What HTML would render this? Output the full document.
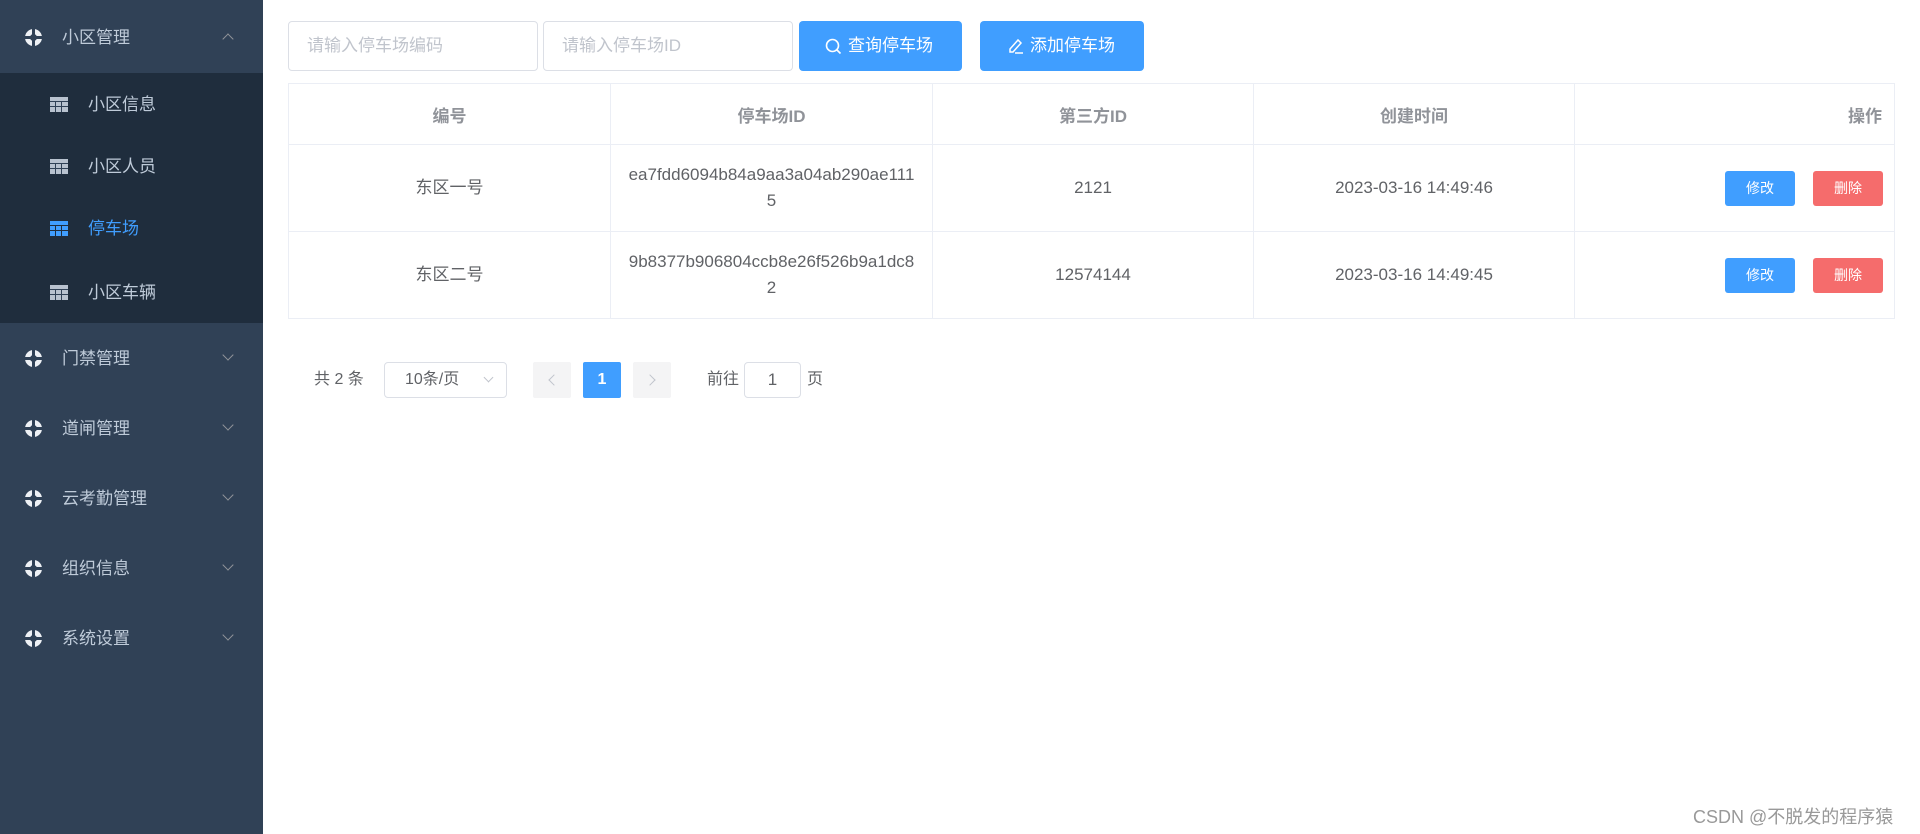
<!DOCTYPE html>
<html><head><meta charset="utf-8"><style>
*{margin:0;padding:0;box-sizing:border-box}
body{width:1920px;height:834px;overflow:hidden;background:#fff;font-family:"Liberation Sans","Noto Sans CJK SC",sans-serif;position:relative;color:#606266}
.side{position:absolute;left:0;top:0;width:263px;height:834px;background:#304156}
.sub{position:absolute;left:0;top:73px;width:263px;height:250px;background:#1f2d3d}
.it{position:absolute;left:0;width:263px;font-size:17px;color:#bfcbd9;line-height:20px}
.gi{position:absolute;left:25px;width:17px;height:17px;border-radius:50%;border:5px solid #eef1f5;}
.gi:after{content:"";position:absolute;left:-6px;top:2px;width:19px;height:3px;background:#304156}
.gi:before{content:"";position:absolute;left:2px;top:-6px;width:3px;height:19px;background:#304156}
.gt{position:absolute;left:62px}
.ar{position:absolute;left:224px;width:8px;height:8px;border-right:1.3px solid #909399;border-bottom:1.3px solid #909399;transform:rotate(45deg)}
.ti{position:absolute;left:50px;width:18px;height:15px;background:
linear-gradient(#304156,#304156) 0 4px/18px 1px no-repeat,
linear-gradient(#304156,#304156) 0 9px/18px 1px no-repeat,
linear-gradient(#304156,#304156) 5px 4px/1px 11px no-repeat,
linear-gradient(#304156,#304156) 11px 4px/1px 11px no-repeat,#b8c2cf}
.st{position:absolute;left:88px}
.inp{position:absolute;top:21px;height:50px;border:1px solid #dcdfe6;border-radius:4px;font-size:17px;color:#c0c4cc;padding:14px 18px;line-height:20px}
.btn{position:absolute;top:21px;height:50px;background:#409eff;border-radius:4px;color:#fff;font-size:17px;line-height:50px}
table{position:absolute;left:288px;top:83px;width:1607px;border-collapse:collapse;font-size:17px}
td,th{border:1px solid #ebeef5;text-align:center;color:#606266;font-weight:normal}
th{height:61px;color:#909399;font-weight:bold}
td{height:87px;line-height:26px}
.b{display:inline-block;width:70px;height:35px;line-height:35px;border-radius:3px;color:#fff;font-size:14px;text-align:center}
.pg{position:absolute;top:362px;height:36px;font-size:16px;line-height:36px}
</style></head><body>
<div class="side">
<div class="it" style="top:28px"><div class="gi" style="top:1px"></div><span class="gt">小区管理</span><div class="ar" style="top:7px;transform:rotate(225deg)"></div></div>
<div class="sub"></div>
<div class="it" style="top:95px"><div class="ti" style="top:2px"></div><span class="st">小区信息</span></div>
<div class="it" style="top:157px"><div class="ti" style="top:2px"></div><span class="st">小区人员</span></div>
<div class="it" style="top:219px;color:#409eff"><div class="ti" style="top:2px;background:
linear-gradient(#1f2d3d,#1f2d3d) 0 4px/18px 1px no-repeat,
linear-gradient(#1f2d3d,#1f2d3d) 0 9px/18px 1px no-repeat,
linear-gradient(#1f2d3d,#1f2d3d) 5px 4px/1px 11px no-repeat,
linear-gradient(#1f2d3d,#1f2d3d) 11px 4px/1px 11px no-repeat,#409eff"></div><span class="st">停车场</span></div>
<div class="it" style="top:283px"><div class="ti" style="top:2px"></div><span class="st">小区车辆</span></div>
<div class="it" style="top:349px"><div class="gi" style="top:1px"></div><span class="gt">门禁管理</span><div class="ar" style="top:2px"></div></div>
<div class="it" style="top:419px"><div class="gi" style="top:1px"></div><span class="gt">道闸管理</span><div class="ar" style="top:2px"></div></div>
<div class="it" style="top:489px"><div class="gi" style="top:1px"></div><span class="gt">云考勤管理</span><div class="ar" style="top:2px"></div></div>
<div class="it" style="top:559px"><div class="gi" style="top:1px"></div><span class="gt">组织信息</span><div class="ar" style="top:2px"></div></div>
<div class="it" style="top:629px"><div class="gi" style="top:1px"></div><span class="gt">系统设置</span><div class="ar" style="top:2px"></div></div>
</div>
<div class="inp" style="left:288px;width:250px">请输入停车场编码</div>
<div class="inp" style="left:543px;width:250px">请输入停车场ID</div>
<div class="btn" style="left:799px;width:163px"><svg style="position:absolute;left:26px;top:17px" width="17" height="17" viewBox="0 0 17 17" fill="none" stroke="#fff" stroke-width="1.6"><circle cx="7.5" cy="7.5" r="6"/><path d="M12 12l3.5 3.5"/></svg><span style="position:absolute;left:49px">查询停车场</span></div>
<div class="btn" style="left:980px;width:164px"><svg style="position:absolute;left:27px;top:16px" width="18" height="18" viewBox="0 0 18 18" fill="none" stroke="#fff" stroke-width="1.5"><path d="M3 12L11 3l3 3-8 9H3z"/><path d="M8 16h8"/></svg><span style="position:absolute;left:50px">添加停车场</span></div>
<table>
<tr><th style="width:322px">编号</th><th style="width:322px">停车场ID</th><th style="width:321px">第三方ID</th><th style="width:321px">创建时间</th><th style="text-align:right;padding-right:12px">操作</th></tr>
<tr><td>东区一号</td><td>ea7fdd6094b84a9aa3a04ab290ae111<br>5</td><td>2121</td><td>2023-03-16 14:49:46</td><td style="text-align:right;padding-right:11px"><span class="b" style="background:#409eff">修改</span><span class="b" style="background:#f56c6c;margin-left:18px">删除</span></td></tr>
<tr><td>东区二号</td><td>9b8377b906804ccb8e26f526b9a1dc8<br>2</td><td>12574144</td><td>2023-03-16 14:49:45</td><td style="text-align:right;padding-right:11px"><span class="b" style="background:#409eff">修改</span><span class="b" style="background:#f56c6c;margin-left:18px">删除</span></td></tr>
</table>
<div class="pg" style="left:314px">共 2 条</div>
<div class="pg" style="left:384px;width:123px;border:1px solid #dcdfe6;border-radius:4px;padding-left:20px;line-height:34px">10条/页<div style="position:absolute;right:14px;top:11px;width:7px;height:7px;border-right:1px solid #c0c4cc;border-bottom:1px solid #c0c4cc;transform:rotate(45deg)"></div></div>
<div class="pg" style="left:533px;width:38px;background:#f4f4f5;border-radius:2px"><div style="position:absolute;left:17px;top:14px;width:8px;height:8px;border-left:1.5px solid #c0c4cc;border-bottom:1.5px solid #c0c4cc;transform:rotate(45deg)"></div></div>
<div class="pg" style="left:583px;width:38px;background:#409eff;border-radius:2px;text-align:center;color:#fff;font-weight:bold">1</div>
<div class="pg" style="left:633px;width:38px;background:#f4f4f5;border-radius:2px"><div style="position:absolute;left:13px;top:14px;width:8px;height:8px;border-right:1.5px solid #c0c4cc;border-top:1.5px solid #c0c4cc;transform:rotate(45deg)"></div></div>
<div class="pg" style="left:707px">前往</div>
<div class="pg" style="left:744px;width:57px;border:1px solid #dcdfe6;border-radius:4px;text-align:center;line-height:34px;font-size:17px">1</div>
<div class="pg" style="left:807px">页</div>
<div style="position:absolute;left:1693px;top:803px;font-size:18px;color:#999">CSDN @不脱发的程序猿</div>
</body></html>
